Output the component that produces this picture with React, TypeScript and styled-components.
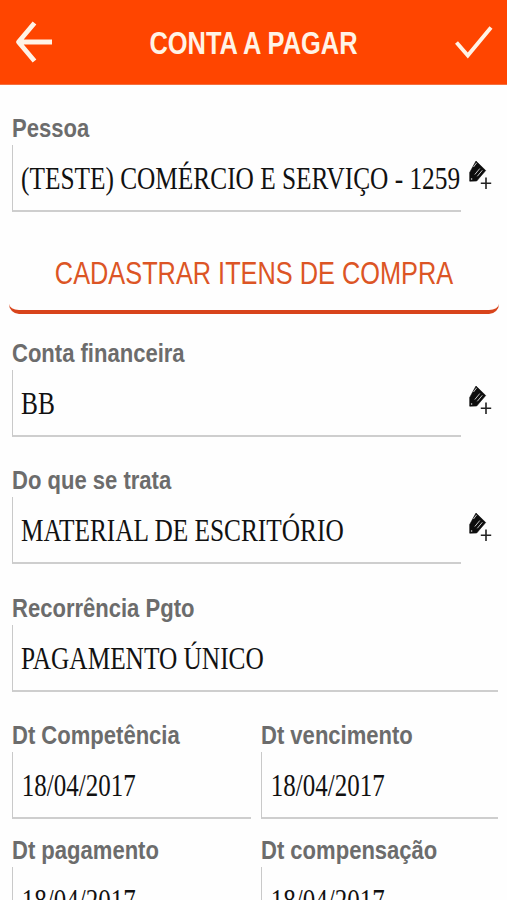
import React from "react";
import styled, { createGlobalStyle } from "styled-components";

const GlobalStyle = createGlobalStyle`
  * { box-sizing: border-box; }
  html, body { margin: 0; background: #fefefe; overflow: hidden; }
`;

const Screen = styled.div`
  height: 900px;
  overflow: hidden;
  background: #fefefe;
  font-family: "Liberation Sans", Arial, sans-serif;
`;

const Header = styled.header`
  display: grid;
  grid-template-columns: 68px 1fr 68px;
  align-items: center;
  height: 85px;
  background: #ff4500;
  border-bottom: 1px solid #f4703f;
`;

const IconButton = styled.button`
  display: flex;
  padding: 0;
  border: 0;
  background: none;
`;

const Title = styled.h1`
  margin: 0;
  padding-top: 3px;
  color: #fff3e6;
  font-size: 31px;
  line-height: 36px;
  font-weight: 700;
  text-align: center;
  white-space: nowrap;
  transform: scaleX(0.82);
`;

const Form = styled.main`
  display: flex;
  flex-direction: column;
  padding: 27px 9px 0 12px;
`;

const FieldBlock = styled.div<{ $gap: number }>`
  display: flex;
  flex-direction: column;
  height: 100px;
  margin-bottom: ${(p) => p.$gap}px;
`;

const Label = styled.label`
  height: 33px;
  color: #6c6c6c;
  font-size: 25.5px;
  line-height: 33px;
  font-weight: 700;
  white-space: nowrap;
  transform: scaleX(0.864);
  transform-origin: 0 0;
`;

const Line = styled.div`
  display: flex;
  height: 67px;
`;

const Box = styled.div<{ $width: number }>`
  flex: none;
  width: ${(p) => p.$width}px;
  padding-left: 8px;
  border-left: 1.5px solid #c9c9c9;
  border-bottom: 2px solid #cecece;
`;

const Value = styled.span<{ $date?: boolean }>`
  display: block;
  padding-left: ${(p) => (p.$date ? 1 : 0)}px;
  color: #111;
  font-family: "Liberation Serif", "Times New Roman", serif;
  font-size: 31px;
  line-height: 67px;
  white-space: nowrap;
  transform: scaleX(${(p) => (p.$date ? 0.806 : 0.817)});
  transform-origin: 0 0;
`;

const EditButton = styled(IconButton)`
  align-self: flex-start;
  margin: 13px 0 0 7px;
`;

const ItemsButton = styled.button`
  height: 90px;
  width: 490px;
  margin: -15px 0 23px -3px;
  padding: 13px 0 0;
  border: 0 solid #d8441b;
  border-bottom-width: 4px;
  border-radius: 10px;
  background: none;
  color: #dc5525;
  font-family: inherit;
  font-size: 31px;
  white-space: nowrap;
`;

const ButtonText = styled.span`
  display: block;
  transform: scaleX(0.817);
`;

const DateRow = styled.div`
  display: grid;
  grid-template-columns: 239px 237px;
  column-gap: 10px;
`;

const BackIcon = () => (
  <svg width="68" height="84" viewBox="0 0 68 84" fill="none" stroke="#fff3e6">
    <path d="M34.500 23 18.500 42 34.500 61M19 42h33" strokeWidth="4.800" strokeLinejoin="round" />
  </svg>
);

const CheckIcon = () => (
  <svg width="68" height="84" viewBox="0 0 68 84" fill="none" stroke="#fff3e6">
    <path d="M17.500 42.500 28.800 55.500 52 27.500" strokeWidth="3.900" />
  </svg>
);

const PencilPlusIcon = () => (
  <svg width="26" height="34" viewBox="0 0 26 34">
    <path d="M1.700 14.500 8 3 17.700 12.500 8.700 23 1.700 23.200Z" fill="#0d0d0d" stroke="#0d0d0d" strokeWidth=".6" strokeLinejoin="round" />
    <path d="m5.500 9 3.200-4.200M6.800 16.500l5-6M9.300 18.300l5-6" stroke="#c8c8c8" strokeWidth="1" fill="none" />
    <circle cx="3.600" cy="21" r=".8" fill="#ddd" />
    <path d="M12.800 25.300h10.400M18 19.500v11.500" stroke="#222" strokeWidth="1.600" />
  </svg>
);

type FieldProps = {
  label: string;
  value: string;
  width: number;
  gap?: number;
  editable?: boolean;
  date?: boolean;
};

const Field = ({ label, value, width, gap = 0, editable, date }: FieldProps) => (
  <FieldBlock $gap={gap}>
    <Label>{label}</Label>
    <Line>
      <Box $width={width}>
        <Value $date={date}>{value}</Value>
      </Box>
      {editable && (
        <EditButton aria-label={`Editar ${label}`}>
          <PencilPlusIcon />
        </EditButton>
      )}
    </Line>
  </FieldBlock>
);

export default function App() {
  return (
    <Screen>
      <GlobalStyle />
      <Header>
        <IconButton aria-label="Voltar"><BackIcon /></IconButton>
        <Title>CONTA A PAGAR</Title>
        <IconButton aria-label="Confirmar"><CheckIcon /></IconButton>
      </Header>
      <Form>
        <Field label="Pessoa" value="(TESTE) COMÉRCIO E SERVIÇO - 1259" width={449} gap={27} editable />
        <ItemsButton>
          <ButtonText>CADASTRAR ITENS DE COMPRA</ButtonText>
        </ItemsButton>
        <Field label="Conta financeira" value="BB" width={449} gap={27} editable />
        <Field label="Do que se trata" value="MATERIAL DE ESCRITÓRIO" width={449} gap={28} editable />
        <Field label="Recorrência Pgto" value="PAGAMENTO ÚNICO" width={486} gap={27} />
        <DateRow>
          <Field label="Dt Competência" value="18/04/2017" width={239} gap={15} date />
          <Field label="Dt vencimento" value="18/04/2017" width={237} gap={15} date />
          <Field label="Dt pagamento" value="18/04/2017" width={239} date />
          <Field label="Dt compensação" value="18/04/2017" width={237} date />
        </DateRow>
      </Form>
    </Screen>
  );
}
